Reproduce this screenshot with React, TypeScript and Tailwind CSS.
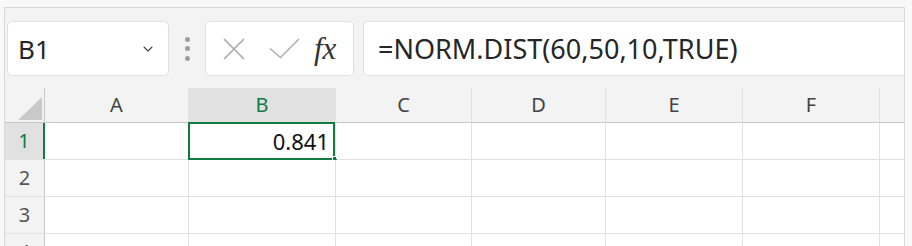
import { ChevronDown } from 'lucide-react';

const cols = [
  { id: 'A', w: 'w-[144px]' },
  { id: 'B', w: 'w-[147px]' },
  { id: 'C', w: 'w-[136px]' },
  { id: 'D', w: 'w-[134px]' },
  { id: 'E', w: 'w-[137px]' },
  { id: 'F', w: 'w-[137px]' },
];

const rows = ['1', '2', '3', '4'];

const ui = { fontFamily: '"Noto Sans", "Open Sans", sans-serif' };

function NameBox() {
  return (
    <div className="flex w-[162px] items-center justify-between rounded-[5px] border border-[#e0e0e0] bg-white pl-[10px] pr-[12px]">
      <span className="text-[26px] leading-none text-[#262626]">B1</span>
      <ChevronDown size={16} strokeWidth={1.6} className="text-[#444]" />
    </div>
  );
}

function FormulaIcons() {
  return (
    <div className="flex w-[149px] items-center rounded-[5px] border border-[#e0e0e0] bg-white pl-[17px]">
      <svg width="22" height="22" viewBox="0 0 22 22" className="mr-[24px]">
        <path d="M1 1L21 21M21 1L1 21" stroke="#a8a8a8" strokeWidth="1.6" fill="none" />
      </svg>
      <svg width="31" height="21" viewBox="0 0 31 21" className="mr-[14px]">
        <path d="M1 10.5L11.5 19.5L30 1" stroke="#b0b0b0" strokeWidth="1.6" fill="none" />
      </svg>
      <span
        className="text-[31px] italic leading-none text-[#333]"
        style={{ fontFamily: '"Liberation Serif", "DejaVu Serif", serif' }}
      >
        fx
      </span>
    </div>
  );
}

export default function App() {
  return (
    <div className="h-[246px] w-[912px] overflow-hidden bg-[#f8f8f8] pl-[4px] pr-[7px] pt-[7px]" style={ui}>
      <div className="flex h-full flex-col overflow-hidden border-l border-r border-t border-[#d8d8d8] bg-[#f3f3f3]">
        <div className="mt-[13px] flex h-[55px] shrink-0 items-stretch pl-[2px]">
          <NameBox />
          <div className="flex w-[36px] flex-col items-center justify-center gap-[4.5px]">
            <span className="h-[5px] w-[5px] rounded-full bg-[#9e9e9e]" />
            <span className="h-[5px] w-[5px] rounded-full bg-[#9e9e9e]" />
            <span className="h-[5px] w-[5px] rounded-full bg-[#9e9e9e]" />
          </div>
          <FormulaIcons />
          <div className="ml-[9px] flex flex-1 items-center rounded-l-[5px] border-y border-l border-[#e0e0e0] bg-white pl-[14px]">
            <span className="text-[27px] leading-none text-[#262626]">=NORM.DIST(60,50,10,TRUE)</span>
          </div>
        </div>

        <div className="mt-[12px] shrink-0">
          <div className="flex h-[35px] border-b border-[#c8c8c8]">
            <div className="relative w-[40px] border-r border-[#c8c8c8]">
              <svg width="24" height="23" viewBox="0 0 24 23" className="absolute right-[2px] bottom-[2px]">
                <path d="M24 0L24 23L0 23Z" fill="#c9c9c9" />
              </svg>
            </div>
            {cols.map(c => (
              <div
                key={c.id}
                className={`${c.w} flex items-center justify-center border-r border-[#e1e1e1] text-[20px] ${
                  c.id === 'B' ? 'bg-[#e1e1e1] text-[#107c41]' : 'text-[#444]'
                }`}
              >
                {c.id}
              </div>
            ))}
            <div className="flex-1" />
          </div>

          {rows.map(r => (
            <div key={r} className="flex h-[37px] border-b border-[#e1e1e1]">
              <div
                className={`flex w-[40px] items-center justify-center text-[20px] ${
                  r === '1'
                    ? 'border-r-[2px] border-[#107c41] bg-[#e1e1e1] text-[#107c41]'
                    : 'border-r border-[#c8c8c8] text-[#555]'
                }`}
              >
                {r}
              </div>
              {cols.map(c => (
                <div key={c.id} className={`${c.w} relative border-r border-[#e1e1e1] bg-white`}>
                  {r === '1' && c.id === 'B' && (
                    <>
                      <div className="absolute -left-[1px] -top-[1px] bottom-[-1px] right-0 flex items-center justify-end border-2 border-[#107c41] pr-[4px]">
                        <span className="text-[22px] leading-none text-[#111]">0.841</span>
                      </div>
                      <div className="absolute -bottom-[3px] -right-[3px] h-[6px] w-[6px] border border-white bg-[#107c41]" />
                    </>
                  )}
                </div>
              ))}
              <div className="flex-1 bg-white" />
            </div>
          ))}
        </div>
      </div>
    </div>
  );
}
